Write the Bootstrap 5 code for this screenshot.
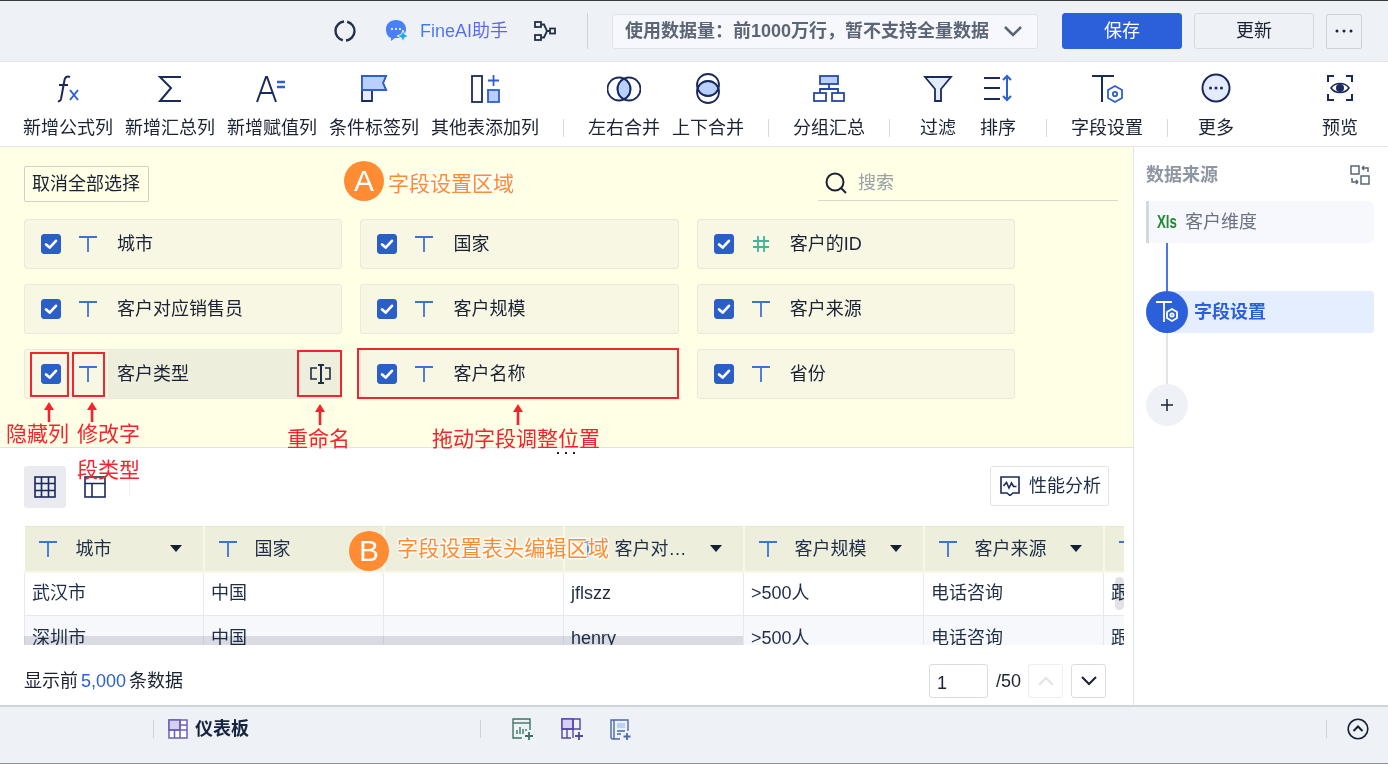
<!DOCTYPE html>
<html lang="zh-CN">
<head>
<meta charset="utf-8">
<title>字段设置</title>
<link href="https://cdn.jsdelivr.net/npm/bootstrap@5.3.0/dist/css/bootstrap.min.css" rel="stylesheet">
<style>
html,body{margin:0;height:100%;overflow:hidden}
body{font-family:"Liberation Sans","Noto Sans CJK SC",sans-serif;font-size:18px;line-height:24px;color:#1a2233;background:#fff}
.shell{position:relative;width:1388px;height:764px;overflow:hidden;display:flex;flex-direction:column;border-top:1px solid #3a3a3a;border-bottom:1px solid #8c8f94}
.topbar{height:61px;flex:none;background:#eef1f6;padding:0 26px 0 0;border-bottom:1px solid #e3e6ec}
.tb-ico{display:block}
.ref-ico{margin-right:28px}
.ai-txt{margin-left:11px;margin-right:26px;background:linear-gradient(90deg,#3f7cf5,#6a5cf0);-webkit-background-clip:text;background-clip:text;color:transparent}
.vsep{width:1px;height:36px;background:#cfd3da;margin:0 24px 0 31px}
.scope{width:426px;height:35px;background:#f6f8fd;border:1px solid #dfe3ea;border-radius:3px;color:#5b6575;font-weight:700;padding:0 15px 0 12px;margin-right:24px}
.btn.save{width:120px;height:36px;padding:0;background:#2b60da;border:1px solid #2b60da;color:#fff;font-size:18px;border-radius:3px;margin-right:12px}
.btn.upd{width:120px;height:36px;padding:0;background:#eef1f6;border:1px solid #d6dae2;color:#1a2233;font-size:18px;border-radius:3px;margin-right:12px}
.btn.dots{width:36px;height:35px;padding:0;background:#eef1f6;border:1px solid #cdd2da;color:#1a2233;border-radius:2px;line-height:1}
.toolbar{height:85px;flex:none;background:#fff;padding:10px 24px 0 23px;gap:12px;border-bottom:1px solid #e3e6ec}
.tool{min-width:48px;text-align:center;white-space:nowrap}
.tool svg{display:block;margin:0 auto 12px}
.tsep{width:1px;height:18px;background:#d6dae2;margin:47px 12px 0}
.main{height:558px;flex:none}
.leftcol{width:1134px;flex:none;border-right:1px solid #dfe3ea}
.yellow{height:301px;background:#ffffe6;border-bottom:1px solid #e4e4d2;padding:19px 0 0 24px}
.btn.cancel{height:36px;padding:0 8px 0 7px;font-size:18px;line-height:24px;background:#ffffe6;border:1px solid #cfd0c6;color:#1a2233;border-radius:2px}
.search{width:300px;height:35px;margin-left:669px;border-bottom:1px solid #d9d9ca;padding-left:6px;color:#9aa0a8;gap:10px}
.fields{display:grid;grid-template-columns:repeat(3,318.400px);column-gap:18px;row-gap:15px;margin-top:17px}
.fcard{height:50px;background:#f7f7e4;border:1px solid #eaeada;border-radius:3px;padding-left:16px;position:relative}
.fcard .form-check-input{width:20px;height:20px;margin:0;background-color:#2b5fc8;border-color:#2b5fc8;border-radius:3px;flex:none;background-image:url("data:image/svg+xml,%3csvg xmlns='http://www.w3.org/2000/svg' viewBox='0 0 20 20'%3e%3cpath fill='none' stroke='%23fff' stroke-width='3' stroke-linecap='round' stroke-linejoin='round' d='M4.500 10.500l4 3.500 7-7.500'/%3e%3c/svg%3e")}
.fname{margin-left:20px}
.tico{margin-left:18px;flex:none}
.hovered{background:#eeeedd}
.hl{position:absolute;left:0;top:0;bottom:0;width:83px;background:#f7f7e4;border-radius:3px 0 0 3px}
.fcard>*{position:relative}
.fcard>.hl{position:absolute}
.ren{margin-left:auto;margin-right:8px}
.views{padding:18px 24px 0 24px;height:78px}
.vw{width:42px;height:42px;border-radius:3px;margin-right:8px}
.vw.on{background:#e9ebf0}
.vline{width:1px;height:30px;background:#eceef2;margin-left:13px}
.btn.perf{height:40px;width:119px;padding:0 0 0 9px;font-size:18px;border:1px solid #dfe3ea;border-radius:3px;background:#fff;color:#1f2d46;margin-left:auto;gap:9px}
.tblwrap{margin-left:24px;width:1100px;height:119px;overflow:hidden;position:relative}
table.grid{table-layout:fixed;width:1259px;margin:0;border-collapse:collapse}
table.grid>thead>tr>th{height:45px;vertical-align:middle;background:#eeeedd;font-weight:400;padding:0 0 0 14px;white-space:nowrap;border:0;border-right:2px solid #f8f8e6;border-bottom:2px solid #f8f8e6;border-top:1px solid #e6e6d4;color:#1f2d46}
table.grid>thead>tr>th:not(:first-child){padding-left:14px}
table.grid>tbody>tr>td{height:44px;vertical-align:middle;padding:0 7px;white-space:nowrap;overflow:hidden;border:0;border-right:1px solid #e6e8ee;border-bottom:1px solid #e6e8ee;color:#1f2d46;background:#fff}
table.grid>tbody>tr:first-child>td{padding-bottom:2px}
table.grid>tbody>tr:nth-child(2)>td{background:#f7f8fc}
table.grid>tbody>tr>td:first-child{border-left:1px solid #e6e8ee}
.hc{gap:18px}
th:first-child .hc{gap:19px}
.hc .car{margin-left:auto;margin-right:21px;width:0;height:0;border-left:6.500px solid transparent;border-right:6.500px solid transparent;border-top:7px solid #142036}
.hc .clip{overflow:hidden;text-overflow:ellipsis}
.hsb{position:absolute;left:0;bottom:0;width:719px;height:9px;background:#e0e1e5;mix-blend-mode:multiply}
.vsb{position:absolute;right:0;top:51px;width:9px;height:33px;background:#e1e2e6;border-radius:5px;mix-blend-mode:multiply}
.foot{padding:19px 27px 0 24px;height:60px}
.foot .num{color:#2b60da;margin:0 3px}
.ftxt{margin-top:5px}
.pinp{width:59px;height:34px;border:1px solid #d9dde3;border-radius:3px;padding:5px 7px 0;font-size:18px;color:#1a2233;line-height:26px}
.pg{margin-left:8px;width:24px;white-space:nowrap}
.pbtn{width:35px;height:34px;border:1px solid #d9dde3;border-radius:3px;margin-left:8px;background:#fff}
.pbtn.off{border-color:#eceef2}
.rightcol{flex:1;background:#fff;padding:15px 14px 0 12px}
.rt{color:#8f96a3;font-weight:700;height:26px;margin-bottom:13px}
.swap{margin-left:auto;margin-right:4px}
.src{height:42px;background:#f6f8fd;border-left:3px solid #d3d7de;border-radius:0 6px 6px 0;padding-left:8px;color:#6b7280}
.xl{font-weight:700;font-size:19px;color:#1f8a2e;margin-right:7px;display:inline-block;transform:scaleX(.7);transform-origin:left;width:21px;white-space:nowrap}
.conn{width:2px;height:48px;margin-left:20px;background:#4a78e0}
.conn.g{height:51px;background:#e0e3e9}
.step{height:42px;background:#e5eeff;border-radius:21px 4px 4px 21px;color:#2b60da;font-weight:700}
.stepc{width:42px;height:42px;border-radius:50%;background:#2b60da;margin-right:6px;flex:none}
.plus{width:42px;height:42px;border-radius:50%;background:#eef1f6;color:#1a2233}
.bottom{flex:1;background:#eef1f6;border-top:2px solid #cfd3da;position:relative;padding-top:10px}
.bsep{width:1px;height:18px;background:#cdd1d8;flex:none;margin-top:3px}
.b1{margin-left:153px}
.bname{font-weight:700;margin-left:7px;color:#16233f}
.bdash{margin-left:14px;margin-top:2px}
.b2{margin-left:231px}
.bi{margin-left:25px}
.bi.first{margin-left:30px}
.b3{left:1326px;top:13px;margin:0}
.bupabs{left:1347px;top:11px}
/* annotations lying over the page */
.nb{position:absolute;border:2px solid #f5232d;pointer-events:none}
.nb1{left:30px;top:351px;width:39px;height:45px}
.nb2{left:72px;top:351px;width:33px;height:45px}
.nb3{left:297px;top:349px;width:45px;height:47px}
.nb4{left:357px;top:347px;width:322px;height:51px}
.na{position:absolute}
.na1{left:44px;top:401px}.na2{left:87px;top:401px}.na3{left:315px;top:403px}.na4{left:513px;top:403px}
.nt{position:absolute;color:#f5232d;font-size:21px;line-height:26px;white-space:nowrap}
.nt1{left:6px;top:420px}.nt2{left:77px;top:420px}.nt3{left:77px;top:456px}.nt4{left:287px;top:425px}.nt5{left:432px;top:425px}
.circ{position:absolute;width:40px;height:40px;border-radius:50%;background:#ff8c33;color:#fff;font-size:30px;line-height:40px;text-align:center}
.ca{left:344px;top:160px}.cb{left:349px;top:530px}
.ot{position:absolute;color:#ff8c33;font-size:21px;line-height:28px;white-space:nowrap;text-shadow:0 0 2px #fff,0 0 2px #fff,0 0 3px #fff,0 0 4px #fff,1px 1px 1px #fff,-1px -1px 1px #fff,1px -1px 1px #fff,-1px 1px 1px #fff}
.ota{left:388px;top:169px}.otb{left:397px;top:534px;font-size:21.200px}
.dots3{position:absolute;left:554px;top:451px;width:24px;height:2px;background:radial-gradient(circle,#1a2233 1px,transparent 1.200px) 0 0/8px 2px repeat-x}
</style>
</head>
<body>
<svg width="0" height="0" class="position-absolute">
<symbol id="t" viewBox="0 0 18 18"><path d="M0 2h18M9 2v15" fill="none" stroke="#3f72d9" stroke-width="1.800"/></symbol>
</svg>
<div class="shell">

<div class="topbar d-flex align-items-center justify-content-end">
  <svg class="tb-ico ref-ico" width="24" height="24" viewBox="0 0 24 24" fill="none" stroke="#243047" stroke-width="2.400"><path d="M11 2.550A9.500 9.500 0 0 0 9.800 21.240"/><path d="M13 21.450A9.500 9.500 0 0 0 14.200 2.760"/></svg>
  <svg class="tb-ico" width="24" height="24" viewBox="0 0 24 24"><path d="M11 1C5 1 1 5 1 10c0 5 2 8 5 9v3l4-3h3c5 0 8-4 8-9 0-5-4-9-10-9z" fill="#4a80f5"/><circle cx="7" cy="10" r="1.100" fill="#fff"/><circle cx="11" cy="10" r="1.100" fill="#fff"/><circle cx="15" cy="10" r="1.100" fill="#fff"/><path d="M18 11l1.700 4.300 4.300 1.700-4.300 1.700-1.700 4.300-1.700-4.300-4.300-1.700 4.300-1.700z" fill="#19a9ef" stroke="#eef1f6"/></svg>
  <span class="ai-txt">FineAI助手</span>
  <svg class="tb-ico" width="22" height="22" viewBox="0 0 22 22" fill="none" stroke="#243047" stroke-width="1.800"><rect x="1" y="2" width="6" height="5"/><rect x="1" y="15" width="6" height="5"/><rect x="16" y="8.500" width="5" height="5"/><path d="M7 4.500h3l3 6.500h3M7 17.500h3l3-6.500"/></svg>
  <div class="vsep"></div>
  <div class="scope d-flex align-items-center justify-content-between"><span>使用数据量：前1000万行，暂不支持全量数据</span>
    <svg width="18" height="12" viewBox="0 0 18 12" fill="none" stroke="#5b6575" stroke-width="2.600"><path d="M1 2l8 8 8-8"/></svg></div>
  <button class="btn save">保存</button>
  <button class="btn upd">更新</button>
  <button class="btn dots d-flex align-items-center justify-content-center" aria-label="more"><svg width="18" height="4" viewBox="0 0 18 4" fill="#1a2233"><circle cx="2" cy="2" r="1.500"/><circle cx="9" cy="2" r="1.500"/><circle cx="16" cy="2" r="1.500"/></svg></button>
</div>

<div class="toolbar d-flex align-items-start">
  <div class="tool"><svg width="32" height="32" viewBox="0 0 32 32" fill="none" stroke="#1b2a5c" stroke-width="2"><path d="M18 5c-3-1-5 0-5.500 3L9 27c-.5 2-2 2.500-3 2M7 13h9"/><path d="M18 18l8 10M26 18l-8 10" stroke="#2f5fd0"/></svg>新增公式列</div>
  <div class="tool"><svg width="32" height="32" viewBox="0 0 32 32" fill="none" stroke="#1b2a5c" stroke-width="2"><path d="M27 5H6l11 11L6 29h21"/></svg>新增汇总列</div>
  <div class="tool"><svg width="32" height="32" viewBox="0 0 32 32" fill="none" stroke="#1b2a5c" stroke-width="2"><path d="M1 30L10 5h1l9 25M5 21h12"/><path d="M21 10h8M21 15h8" stroke="#2f5fd0" stroke-width="2.400"/></svg>新增赋值列</div>
  <div class="tool"><svg width="32" height="32" viewBox="0 0 32 32" stroke="#1b2a5c" stroke-width="1.800"><path d="M4 4h24l-3 7 3 7H14V29H4z" fill="#e3ecff"/><path d="M4 4h24l-3 7 3 7H4z" fill="#b8d0fb" stroke="#2f5fd0"/></svg>条件标签列</div>
  <div class="tool"><svg width="32" height="32" viewBox="0 0 32 32" stroke="#1b2a5c" stroke-width="1.800" fill="none"><rect x="3" y="4" width="10" height="26"/><rect x="19" y="18" width="11" height="12" fill="#b8d0fb" stroke="#2f5fd0"/><path d="M24.500 3v11M19 8.500h11" stroke="#2f5fd0"/></svg>其他表添加列</div>
  <div class="tsep"></div>
  <div class="tool"><svg width="34" height="32" viewBox="0 0 34 32" fill="none" stroke="#1b2a5c" stroke-width="1.800"><path d="M17 6.700a11.500 11.500 0 0 1 0 20.600 11.500 11.500 0 0 1 0-20.600z" fill="#b8d0fb" stroke="#2f5fd0"/><circle cx="12" cy="17" r="11.500"/><circle cx="22" cy="17" r="11.500"/></svg>左右合并</div>
  <div class="tool"><svg width="32" height="32" viewBox="0 0 32 32" fill="none" stroke="#1b2a5c" stroke-width="1.800"><path d="M5.600 16.500a11 11 0 0 1 20.800 0 11 11 0 0 1-20.800 0z" fill="#b8d0fb" stroke="#2f5fd0"/><circle cx="16" cy="13" r="11"/><circle cx="16" cy="20" r="11"/></svg>上下合并</div>
  <div class="tsep"></div>
  <div class="tool"><svg width="32" height="32" viewBox="0 0 32 32" fill="none" stroke="#2748a8" stroke-width="1.800"><rect x="7" y="4" width="18" height="8" fill="#b8d0fb"/><rect x="1" y="21" width="12" height="8"/><rect x="19" y="21" width="12" height="8"/><path d="M16 12v5M7 21v-4h18v4"/></svg>分组汇总</div>
  <div class="tsep"></div>
  <div class="tool"><svg width="32" height="32" viewBox="0 0 32 32" stroke="#1b2a5c" stroke-width="1.800"><path d="M3 5h26L19 17v12h-6V17z" fill="#e3ecff"/></svg>过滤</div>
  <div class="tool"><svg width="32" height="32" viewBox="0 0 32 32" fill="none" stroke="#1b2a5c" stroke-width="2"><path d="M2 6h16M2 16h16M2 27h16"/><path d="M25 4v24M21 8l4-4 4 4M21 24l4 4 4-4" stroke="#2f5fd0"/></svg>排序</div>
  <div class="tsep"></div>
  <div class="tool"><svg width="36" height="32" viewBox="0 0 36 32" fill="none" stroke="#1b2a5c" stroke-width="2"><path d="M3 4h22M13 4v26"/><path d="M26 14l7 4v8l-7 4-7-4v-8z" stroke="#2f5fd0" stroke-width="1.800"/><circle cx="26" cy="22" r="2.200" stroke="#2f5fd0" stroke-width="1.800"/></svg>字段设置</div>
  <div class="tsep"></div>
  <div class="tool"><svg width="32" height="32" viewBox="0 0 32 32"><circle cx="16" cy="16" r="13.500" fill="#e3ecff" stroke="#1b2a5c" stroke-width="2"/><circle cx="10.500" cy="16" r="1.500" fill="#1b2a5c"/><circle cx="16" cy="16" r="1.500" fill="#1b2a5c"/><circle cx="21.500" cy="16" r="1.500" fill="#1b2a5c"/></svg>更多</div>
  <div class="tool ms-auto"><svg width="32" height="32" viewBox="0 0 32 32" fill="none" stroke="#1b2a5c" stroke-width="2"><path d="M4 10V4h6M22 4h6v6M28 22v6h-6M10 28H4v-6"/><path d="M7 16c4-6 14-6 18 0-4 6-14 6-18 0z" stroke-width="1.600"/><circle cx="16" cy="16" r="3" fill="#1b2a5c"/></svg>预览</div>
</div>

<div class="main d-flex">
  <div class="leftcol">
    <div class="yellow">
      <div class="d-flex align-items-start">
        <button class="btn cancel">取消全部选择</button>
        <div class="search d-flex align-items-center">
          <svg width="24" height="24" viewBox="0 0 24 24" fill="none" stroke="#1a2233" stroke-width="2"><circle cx="11" cy="11" r="8.500"/><path d="M17 17l5 5"/></svg>
          <span>搜索</span>
        </div>
      </div>
      <div class="fields">
        <div class="fcard d-flex align-items-center"><input class="form-check-input" type="checkbox" checked aria-label="城市"><svg class="tico" width="18" height="18"><use href="#t"/></svg><span class="fname">城市</span></div>
        <div class="fcard d-flex align-items-center"><input class="form-check-input" type="checkbox" checked aria-label="国家"><svg class="tico" width="18" height="18"><use href="#t"/></svg><span class="fname">国家</span></div>
        <div class="fcard d-flex align-items-center"><input class="form-check-input" type="checkbox" checked aria-label="客户的ID"><svg class="tico" width="18" height="18" viewBox="0 0 18 18" fill="none" stroke="#44b39a" stroke-width="1.800"><path d="M6 1v16M12 1v16M1 6h16M1 12h16"/></svg><span class="fname">客户的ID</span></div>
        <div class="fcard d-flex align-items-center"><input class="form-check-input" type="checkbox" checked aria-label="客户对应销售员"><svg class="tico" width="18" height="18"><use href="#t"/></svg><span class="fname">客户对应销售员</span></div>
        <div class="fcard d-flex align-items-center"><input class="form-check-input" type="checkbox" checked aria-label="客户规模"><svg class="tico" width="18" height="18"><use href="#t"/></svg><span class="fname">客户规模</span></div>
        <div class="fcard d-flex align-items-center"><input class="form-check-input" type="checkbox" checked aria-label="客户来源"><svg class="tico" width="18" height="18"><use href="#t"/></svg><span class="fname">客户来源</span></div>
        <div class="fcard hovered d-flex align-items-center"><div class="hl"></div><input class="form-check-input" type="checkbox" checked aria-label="客户类型"><svg class="tico" width="18" height="18"><use href="#t"/></svg><span class="fname">客户类型</span>
          <svg class="ren" width="24" height="24" viewBox="0 0 24 24" fill="none" stroke="#1f2d46" stroke-width="1.600"><path d="M8 6H2v11h6M16 6h5v11h-5"/><path d="M12 3v18M9 3h6M9 21h6" stroke-width="2"/></svg></div>
        <div class="fcard d-flex align-items-center"><input class="form-check-input" type="checkbox" checked aria-label="客户名称"><svg class="tico" width="18" height="18"><use href="#t"/></svg><span class="fname">客户名称</span></div>
        <div class="fcard d-flex align-items-center"><input class="form-check-input" type="checkbox" checked aria-label="省份"><svg class="tico" width="18" height="18"><use href="#t"/></svg><span class="fname">省份</span></div>
      </div>
    </div>

    <div class="views d-flex align-items-start">
      <div class="vw on d-flex align-items-center justify-content-center"><svg width="22" height="22" viewBox="0 0 22 22" fill="none" stroke="#1b2a5c" stroke-width="1.600"><rect x="1" y="1" width="20" height="20"/><path d="M7.500 1v20M14.500 1v20M1 7.500h20M1 14.500h20"/></svg></div>
      <div class="vw d-flex align-items-center justify-content-center m-0"><svg width="22" height="22" viewBox="0 0 22 22" fill="none" stroke="#1b2a5c" stroke-width="1.600"><rect x="1" y="1" width="20" height="20"/><path d="M1 7.500h20M8 7.500V21"/></svg></div>
      <div class="vline"></div>
      <button class="btn perf d-flex align-items-center"><svg width="20" height="20" viewBox="0 0 20 20" fill="none" stroke="#1b2a5c" stroke-width="1.600"><path d="M7 17H1V1h18v16h-6l-3 2.500z"/><path d="M3.500 10l3-3.500 2.500 5.500 2.500-5 2 3.500h3"/></svg><span>性能分析</span></button>
    </div>

    <div class="tblwrap">
      <table class="table grid">
        <colgroup><col style="width:179px"><col style="width:180px"><col style="width:180px"><col style="width:180px"><col style="width:180px"><col style="width:180px"><col style="width:180px"></colgroup>
        <thead><tr>
          <th><div class="hc d-flex align-items-center"><svg width="18" height="18"><use href="#t"/></svg><span class="clip">城市</span><i class="car"></i></div></th>
          <th><div class="hc d-flex align-items-center"><svg width="18" height="18"><use href="#t"/></svg><span class="clip">国家</span></div></th>
          <th></th>
          <th><div class="hc d-flex align-items-center"><svg width="18" height="18"><use href="#t"/></svg><span class="clip">客户对…</span><i class="car"></i></div></th>
          <th><div class="hc d-flex align-items-center"><svg width="18" height="18"><use href="#t"/></svg><span class="clip">客户规模</span><i class="car"></i></div></th>
          <th><div class="hc d-flex align-items-center"><svg width="18" height="18"><use href="#t"/></svg><span class="clip">客户来源</span><i class="car"></i></div></th>
          <th><div class="hc d-flex align-items-center"><svg width="18" height="18"><use href="#t"/></svg><span class="clip">跟进状态</span><i class="car"></i></div></th>
        </tr></thead>
        <tbody>
          <tr><td>武汉市</td><td>中国</td><td></td><td>jflszz</td><td>&gt;500人</td><td>电话咨询</td><td>跟进中</td></tr>
          <tr><td>深圳市</td><td>中国</td><td></td><td>henry</td><td>&gt;500人</td><td>电话咨询</td><td>跟进中</td></tr>
        </tbody>
      </table>
      <div class="hsb"></div>
      <div class="vsb"></div>
    </div>

    <div class="foot d-flex align-items-start">
      <div class="ftxt">显示前<span class="num">5,000</span>条数据</div>
      <div class="ms-auto d-flex align-items-center">
        <div class="pinp">1</div><span class="pg">/50</span>
        <div class="pbtn off d-flex align-items-center justify-content-center"><svg width="18" height="12" viewBox="0 0 18 12" fill="none" stroke="#e1e3e8" stroke-width="2"><path d="M2 10l7-7 7 7"/></svg></div>
        <div class="pbtn d-flex align-items-center justify-content-center"><svg width="18" height="12" viewBox="0 0 18 12" fill="none" stroke="#1a2233" stroke-width="2"><path d="M2 2l7 7 7-7"/></svg></div>
      </div>
    </div>
  </div>

  <div class="rightcol">
    <div class="rt d-flex align-items-center"><span>数据来源</span>
      <svg class="swap" width="20" height="22" viewBox="0 0 20 22" fill="none" stroke="#5b6575" stroke-width="1.500"><rect x="1" y="2" width="8" height="8"/><rect x="11" y="12" width="8" height="8"/><path d="M12 4h6v4M12 4l2-2M12 4l2 2M8 18H2v-4M8 18l-2 2M8 18l-2-2"/></svg></div>
    <div class="src d-flex align-items-center"><span class="xl">Xls</span>客户维度</div>
    <div class="conn"></div>
    <div class="step d-flex align-items-center"><div class="stepc d-flex align-items-center justify-content-center"><svg width="26" height="24" viewBox="0 0 26 24" fill="none" stroke="#fff" stroke-width="1.800"><path d="M2 2h16M10 2v20"/><path d="M18 9l5 3v6l-5 3-5-3v-6z"/><circle cx="18" cy="15" r="1.600"/></svg></div>字段设置</div>
    <div class="conn g"></div>
    <div class="plus d-flex align-items-center justify-content-center"><svg width="14" height="14" viewBox="0 0 14 14" stroke="#1a2233" stroke-width="1.500"><path d="M7 1v12M1 7h12"/></svg></div>
  </div>
</div>

<div class="bottom d-flex align-items-start">
  <div class="bsep b1"></div>
  <svg class="bdash" width="20" height="20" viewBox="0 0 20 20" stroke="#6a5fc0" stroke-width="1.500"><rect x="1" y="1" width="18" height="18" fill="#fff"/><rect x="1" y="1" width="11" height="10" fill="#d5d0f2"/><path d="M12 1v18M1 11h18M6.500 11v8M12 6h7" fill="none"/></svg>
  <span class="bname">仪表板</span>
  <div class="bsep b2"></div>
  <svg class="bi first" width="24" height="24" viewBox="0 0 24 24" fill="none" stroke="#3e7466" stroke-width="1.400"><path d="M11 21H2V2h17v11"/><path d="M2 6h17"/><path d="M6 17v-4M9 17v-7M12 17v-5M15 14v-2"/><path d="M18 15v8M14 19h8" stroke-width="1.800"/></svg>
  <svg class="bi" width="24" height="24" viewBox="0 0 24 24" fill="none" stroke="#5146a8" stroke-width="1.400"><path d="M11 21H2V2h18v11"/><rect x="2" y="2" width="11" height="10" fill="#d5d0f2"/><path d="M13 2v19M2 12h18M7 12v9"/><path d="M19 15v8M15 19h8" stroke-width="1.800"/></svg>
  <svg class="bi" width="24" height="24" viewBox="0 0 24 24" fill="none" stroke="#4a69a8" stroke-width="1.400"><path d="M11 22H4a2 2 0 0 1-2-2V3h17v11"/><path d="M5 3v19"/><rect x="8" y="6" width="8" height="5" fill="#b8d0fb" stroke="none"/><path d="M8 14h8M8 17h4"/><path d="M18 16v7M14.500 19.500h7" stroke-width="1.800"/></svg>
  <div class="bsep b3 position-absolute"></div>
  <svg class="position-absolute bupabs" width="22" height="22" viewBox="0 0 22 22" fill="none" stroke="#142036" stroke-width="1.600"><circle cx="11" cy="11" r="9.800"/><path d="M6.500 13l4.500-4.500 4.500 4.500" stroke-width="2"/></svg>
</div>

<!-- annotations drawn over the page -->
<div class="nb nb1"></div><div class="nb nb2"></div><div class="nb nb3"></div><div class="nb nb4"></div>
<svg class="na na1" width="10" height="20" viewBox="0 0 10 20"><path d="M5 20V4" stroke="#f5232d" stroke-width="2.600"/><path d="M5 0l5 8H0z" fill="#f5232d"/></svg>
<svg class="na na2" width="10" height="20" viewBox="0 0 10 20"><path d="M5 20V4" stroke="#f5232d" stroke-width="2.600"/><path d="M5 0l5 8H0z" fill="#f5232d"/></svg>
<svg class="na na3" width="10" height="21" viewBox="0 0 10 21"><path d="M5 21V4" stroke="#f5232d" stroke-width="2.600"/><path d="M5 0l5 8H0z" fill="#f5232d"/></svg>
<svg class="na na4" width="10" height="21" viewBox="0 0 10 21"><path d="M5 21V4" stroke="#f5232d" stroke-width="2.600"/><path d="M5 0l5 8H0z" fill="#f5232d"/></svg>
<div class="nt nt1">隐藏列</div><div class="nt nt2">修改字</div><div class="nt nt3">段类型</div><div class="nt nt4">重命名</div><div class="nt nt5">拖动字段调整位置</div>
<div class="circ ca">A</div><div class="ot ota">字段设置区域</div>
<div class="circ cb">B</div><div class="ot otb">字段设置表头编辑区域</div>
<div class="dots3"></div>
</div>
</body>
</html>
